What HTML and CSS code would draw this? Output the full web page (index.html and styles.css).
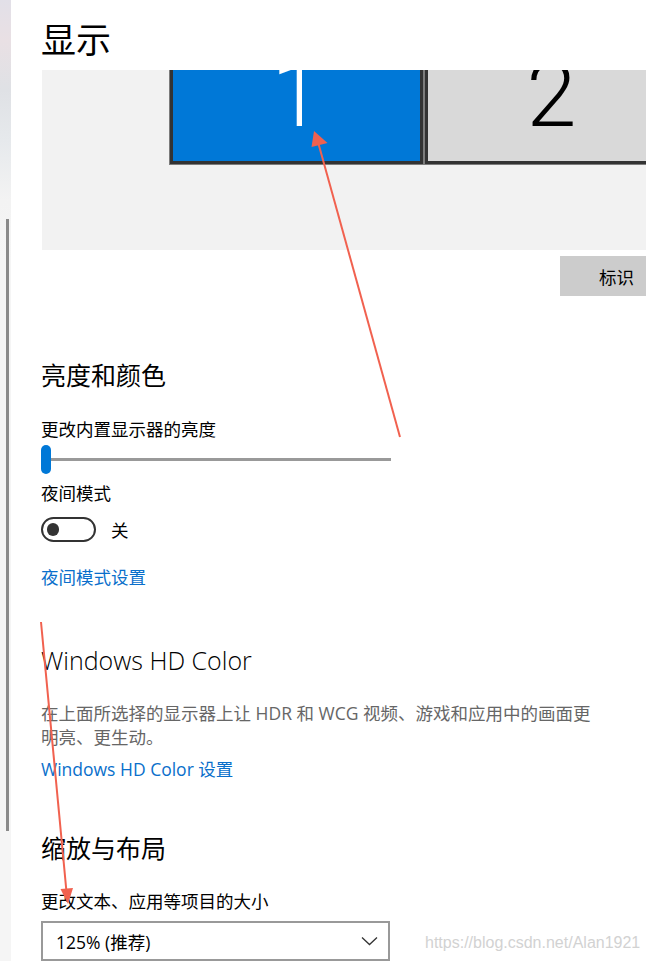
FILE: index.html
```html
<!DOCTYPE html>
<html lang="zh-CN">
<head>
<meta charset="utf-8">
<title>显示</title>
<link rel="stylesheet" href="styles.css">
</head>
<body>
<div class="page">
  <aside class="rail"><div class="rail-thumb"></div></aside>
  <main class="content">
    <h1 class="title">显示</h1>
    <div class="arrange">
      <div class="monitor monitor-active"><span class="num">1</span></div>
      <div class="monitor"><span class="num">2</span></div>
    </div>
    <div class="identify-row"><button class="identify">标识</button></div>

    <h2 class="section">亮度和颜色</h2>
    <div class="label">更改内置显示器的亮度</div>
    <div class="slider"><span class="slider-thumb"></span><span class="slider-track"></span></div>
    <div class="label label-night">夜间模式</div>
    <div class="toggle-row">
      <span class="toggle"><span class="knob"></span></span>
      <span class="toggle-text">关</span>
    </div>
    <a class="link link-night">夜间模式设置</a>

    <h2 class="section section-hd">Windows HD Color</h2>
    <p class="desc">在上面所选择的显示器上让 HDR 和 WCG 视频、游戏和应用中的画面更明亮、更生动。</p>
    <a class="link link-hd">Windows HD Color 设置</a>

    <h2 class="section section-scale">缩放与布局</h2>
    <div class="label label-scale">更改文本、应用等项目的大小</div>
    <div class="dropdown">
      <span class="dropdown-value">125% (推荐)</span>
      <svg class="chevron" width="17" height="10" viewBox="0 0 17 10"><path d="M1 1.5 L8.5 8.5 L16 1.5" fill="none" stroke="#333" stroke-width="1.3"/></svg>
    </div>
  </main>

  <svg class="annot" width="646" height="961" viewBox="0 0 646 961">
    <line x1="400" y1="437" x2="318" y2="142" stroke="#f1614f" stroke-width="2"/>
    <polygon points="314,131 311.5,147 327.5,143" fill="#f1614f"/>
    <line x1="41" y1="622" x2="66.5" y2="892" stroke="#f1614f" stroke-width="2"/>
    <polygon points="68,904 60.5,889 73,888" fill="#f1614f"/>
  </svg>
  <div class="watermark">https://blog.csdn.net/Alan1921</div>
</div>
</body>
</html>
```

FILE: styles.css
```css
html, body {
  margin: 0;
  padding: 0;
  background: #ffffff;
}

body {
  font-family: "Open Sans", "Noto Sans CJK SC", sans-serif;
  color: #000;
  overflow: hidden;
}

.page {
  position: relative;
  display: flex;
  width: 646px;
  height: 961px;
  overflow: hidden;
}

.rail {
  flex: 0 0 11px;
  height: 961px;
  padding-top: 219px;
  box-sizing: border-box;
  background: linear-gradient(to bottom, #e2e0e8 0px, #e9e0e4 40px, #dfe1e5 90px, #e6e9ec 140px, #f3f3f3 200px, #f5f5f5 260px, #f5f5f5 100%);
}

.rail-thumb {
  width: 3px;
  height: 612px;
  margin-left: 6px;
  background: #8a8a8a;
}

.content {
  flex: 1;
  min-width: 0;
  padding-left: 30px;
}

.title {
  margin: 0;
  padding-top: 10px;
  font-size: 35px;
  font-weight: 400;
  line-height: 60px;
  height: 60px;
}

.arrange {
  height: 180px;
  margin-left: 1px;
  padding: 0 0 85px 127px;
  box-sizing: border-box;
  background: #f2f2f2;
  overflow: hidden;
  display: flex;
  align-items: flex-end;
}

.monitor {
  flex: 0 0 255px;
  height: 220px;
  box-sizing: border-box;
  border: 1px solid #7c7c7c;
  box-shadow: inset 0 0 0 3px #333333;
  background: #d9d9d9;
  display: flex;
  justify-content: center;
  align-items: flex-end;
  padding-bottom: 23px;
}

.monitor-active {
  background: #0078d7;
}

.num {
  font-family: "Roboto", sans-serif;
  font-weight: 300;
  font-size: 90px;
  line-height: 90px;
  color: #000;
}

.monitor-active .num {
  color: #fff;
}

.identify-row {
  display: flex;
  justify-content: flex-end;
  margin-top: 6px;
}

.identify {
  width: 86px;
  height: 40px;
  border: none;
  background: #cccccc;
  padding: 0 0 0 39px;
  text-align: left;
  font-family: "Open Sans", "Noto Sans CJK SC", sans-serif;
  font-size: 17.5px;
  color: #000;
  white-space: nowrap;
}

.section {
  margin: 61px 0 0;
  font-size: 25px;
  font-weight: 400;
  line-height: 36px;
}

.section-hd {
  margin-top: 53px;
  font-weight: 300;
}

.section-scale {
  margin-top: 49px;
}

.label {
  margin-top: 24px;
  font-size: 17.5px;
  line-height: 24px;
}

.label-night {
  margin-top: 7px;
}

.label-scale {
  margin-top: 23px;
}

.slider {
  width: 350px;
  height: 29px;
  margin-top: 4px;
  display: flex;
  align-items: center;
}

.slider-thumb {
  width: 10px;
  height: 29px;
  border-radius: 5px;
  background: #0078d7;
}

.slider-track {
  flex: 1;
  height: 3px;
  background: #999999;
}

.toggle-row {
  margin-top: 12px;
  display: flex;
  align-items: center;
  gap: 15px;
  height: 25px;
}

.toggle {
  width: 55px;
  height: 25px;
  box-sizing: border-box;
  border: 2.5px solid #333;
  border-radius: 13px;
  display: flex;
  align-items: center;
  padding-left: 3.5px;
}

.knob {
  width: 12.5px;
  height: 12.5px;
  border-radius: 50%;
  background: #333;
}

.toggle-text {
  font-size: 17.5px;
  line-height: 24px;
}

.link {
  display: block;
  font-size: 17.5px;
  line-height: 24px;
  color: #0a6fcb;
  text-decoration: none;
}

.link-night {
  margin-top: 23px;
}

.link-hd {
  margin-top: 8px;
}

.desc {
  margin: 23px 0 0;
  max-width: 560px;
  font-size: 17.5px;
  line-height: 24px;
  color: #666666;
}

.dropdown {
  margin-top: 8px;
  width: 349px;
  height: 40px;
  box-sizing: border-box;
  border: 2px solid #999999;
  display: flex;
  align-items: center;
  justify-content: space-between;
  padding: 0 10px 0 13px;
  font-size: 17.5px;
}

.chevron {
  display: block;
}

.annot {
  position: absolute;
  left: 0;
  top: 0;
  pointer-events: none;
}

.watermark {
  position: absolute;
  left: 425px;
  top: 932px;
  font-family: "Liberation Sans", sans-serif;
  font-size: 16px;
  line-height: 22px;
  color: #d2d2d2;
  white-space: nowrap;
}
```
